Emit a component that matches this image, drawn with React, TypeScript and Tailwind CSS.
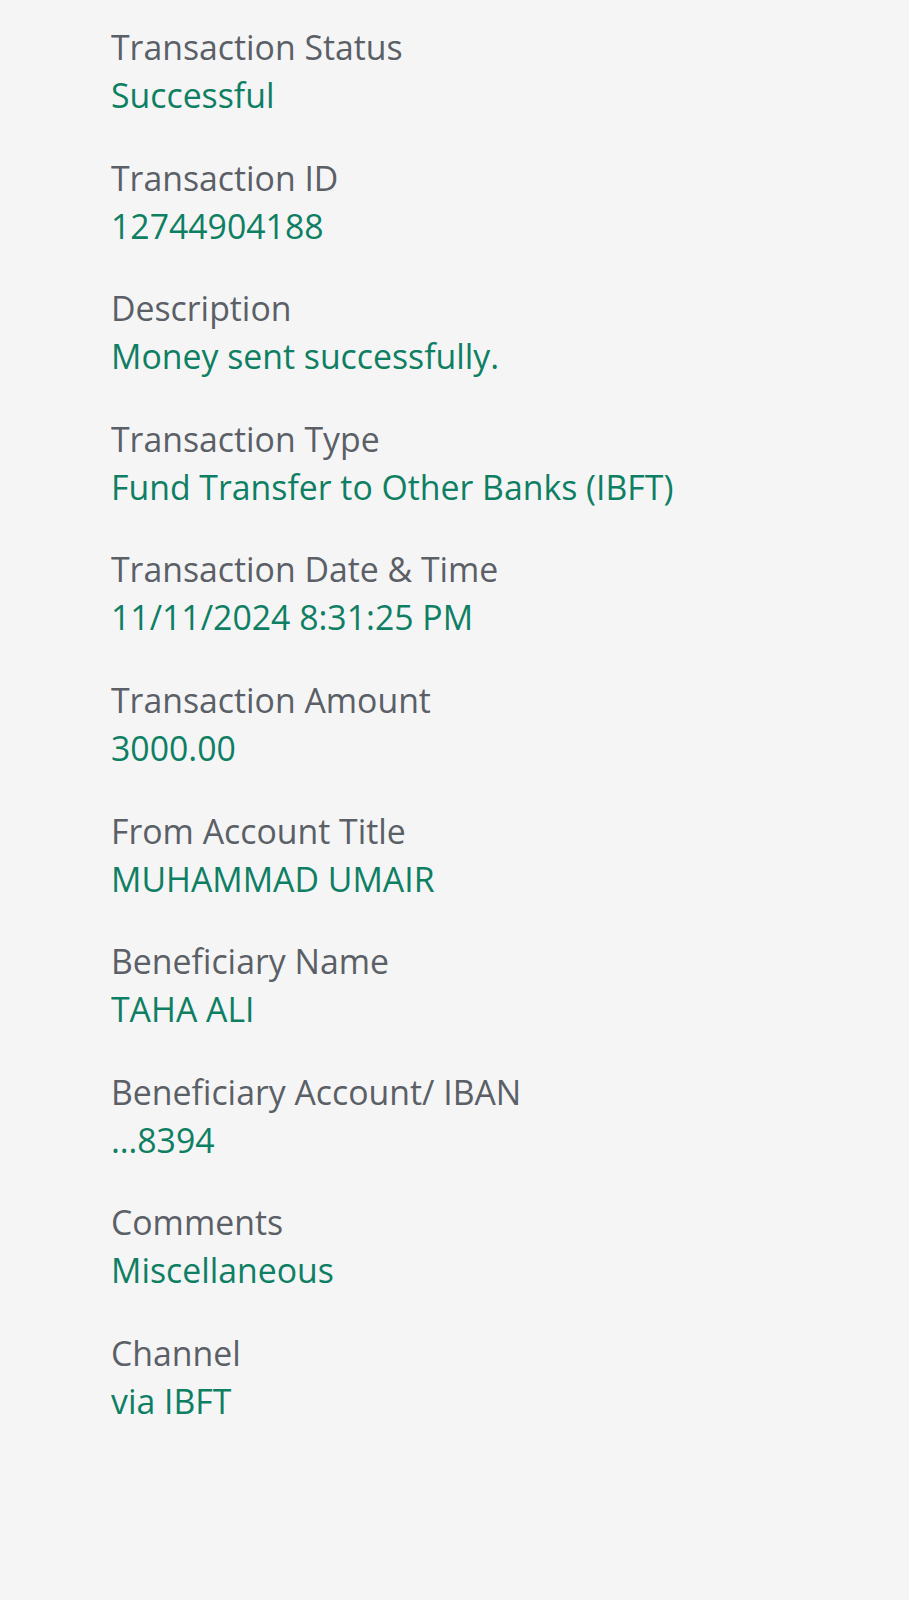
const rows = [
  { label: "Transaction Status", value: "Successful" },
  { label: "Transaction ID", value: "12744904188" },
  { label: "Description", value: "Money sent successfully." },
  { label: "Transaction Type", value: "Fund Transfer to Other Banks (IBFT)" },
  { label: "Transaction Date & Time", value: "11/11/2024 8:31:25 PM" },
  { label: "Transaction Amount", value: "3000.00" },
  { label: "From Account Title", value: "MUHAMMAD UMAIR" },
  { label: "Beneficiary Name", value: "TAHA ALI" },
  { label: "Beneficiary Account/ IBAN", value: "…8394" },
  { label: "Comments", value: "Miscellaneous" },
  { label: "Channel", value: "via IBFT" },
];

export default function App() {
  return (
    <div className="min-h-[1600px] bg-[#f5f5f6] pl-[111px] pt-[23px] font-['Open_Sans',sans-serif]">
      <div className="flex flex-col gap-[34.6px]">
        {rows.map((r) => (
          <div key={r.label} className="text-[33.8px] leading-[48px]">
            <div className="text-[#5b5f66]">{r.label}</div>
            <div className="text-[#0e7f63]">{r.value}</div>
          </div>
        ))}
      </div>
    </div>
  );
}
